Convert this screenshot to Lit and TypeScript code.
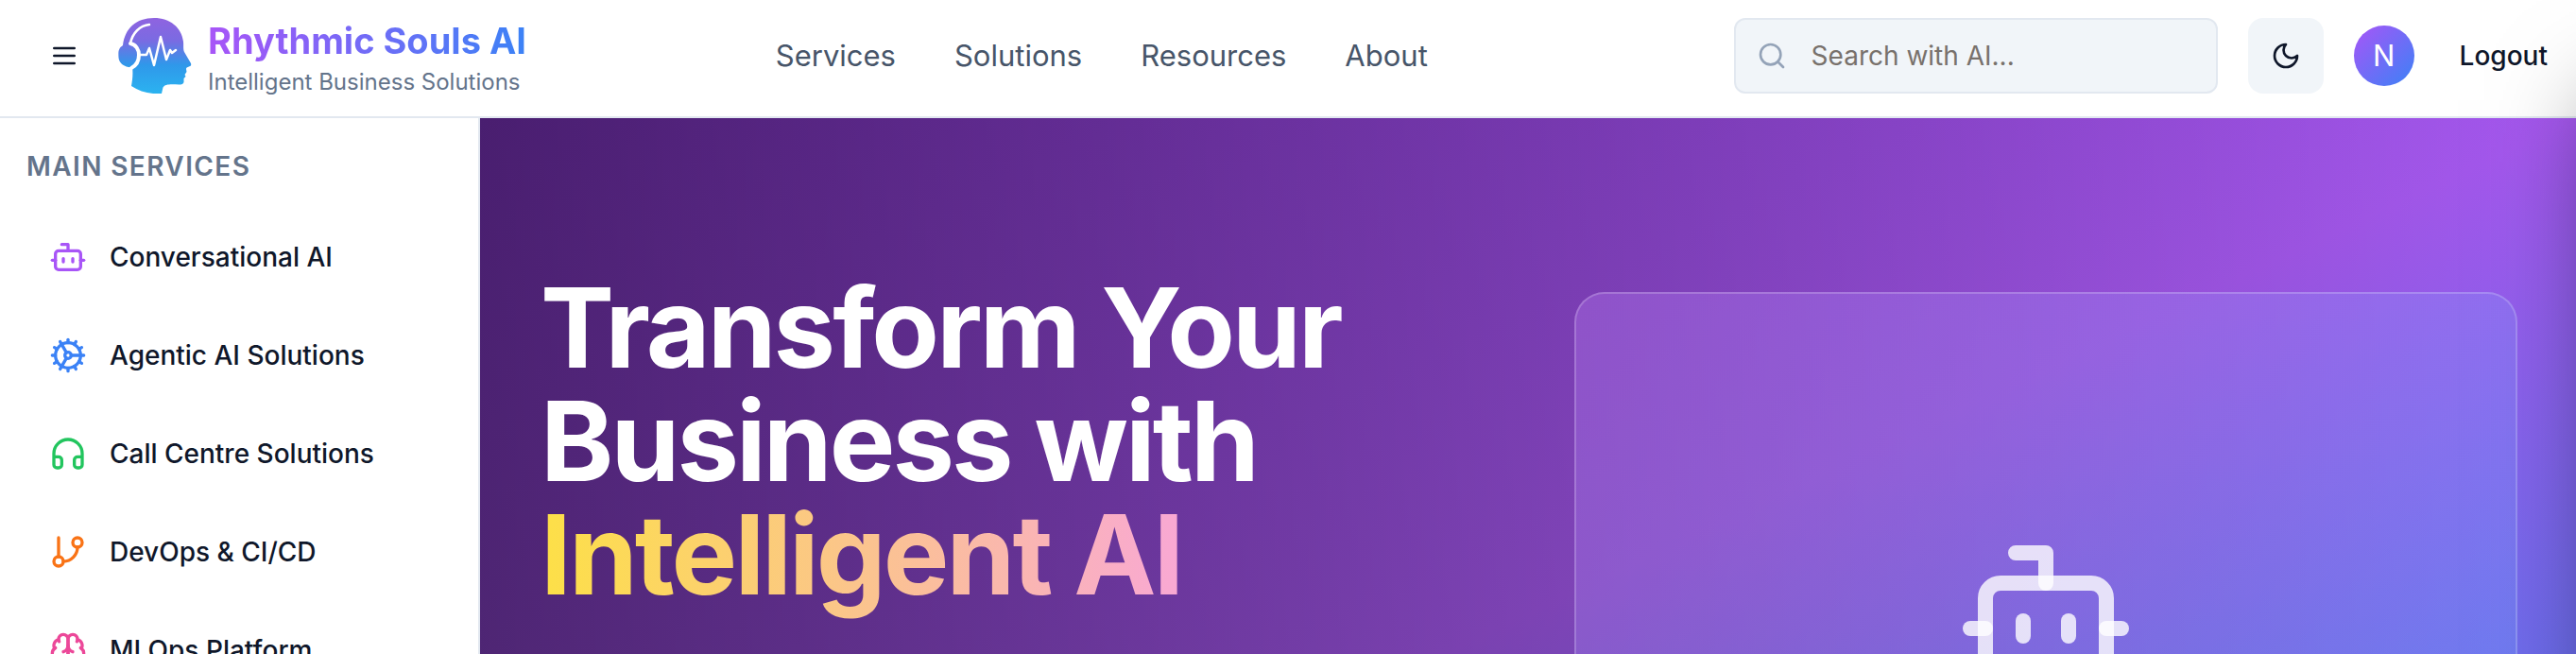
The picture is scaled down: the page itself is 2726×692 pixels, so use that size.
import { LitElement, html, css, svg } from "lit";
import { customElement } from "lit/decorators.js";

const botShape = svg`<path d="M12 8V4H8"/><rect width="16" height="12" x="4" y="8" rx="2"/><path d="M2 14h2"/><path d="M20 14h2"/><path d="M15 13v2"/><path d="M9 13v2"/>`;

const services = [
  { label: "Conversational AI", tone: "purple", shape: botShape },
  {
    label: "Agentic AI Solutions",
    tone: "blue",
    shape: svg`<path d="M12 20a8 8 0 1 0 0-16 8 8 0 0 0 0 16Z"/><path d="M12 14a2 2 0 1 0 0-4 2 2 0 0 0 0 4Z"/><path d="M12 2v2"/><path d="M12 22v-2"/><path d="m17 20.66-1-1.73"/><path d="M11 10.27 7 3.34"/><path d="m20.66 17-1.73-1"/><path d="m3.34 7 1.73 1"/><path d="M14 12h8"/><path d="M2 12h2"/><path d="m20.66 7-1.73 1"/><path d="m3.34 17 1.73-1"/><path d="m17 3.34-1 1.73"/><path d="m11 13.73-4 6.93"/>`,
  },
  {
    label: "Call Centre Solutions",
    tone: "green",
    shape: svg`<path d="M3 14h3a2 2 0 0 1 2 2v3a2 2 0 0 1-2 2H5a2 2 0 0 1-2-2v-7a9 9 0 0 1 18 0v7a2 2 0 0 1-2 2h-1a2 2 0 0 1-2-2v-3a2 2 0 0 1 2-2h3"/>`,
  },
  {
    label: "DevOps & CI/CD",
    tone: "orange",
    shape: svg`<line x1="6" x2="6" y1="3" y2="15"/><circle cx="18" cy="6" r="3"/><circle cx="6" cy="18" r="3"/><path d="M18 9a9 9 0 0 1-9 9"/>`,
  },
  {
    label: "MLOps Platform",
    tone: "pink",
    shape: svg`<path d="M12 5a3 3 0 1 0-5.997.125 4 4 0 0 0-2.526 5.77 4 4 0 0 0 .556 6.588A4 4 0 1 0 12 18Z"/><path d="M12 5a3 3 0 1 1 5.997.125 4 4 0 0 1 2.526 5.77 4 4 0 0 1-.556 6.588A4 4 0 1 1 12 18Z"/><path d="M15 13a4.5 4.5 0 0 1-3-4 4.5 4.5 0 0 1-3 4"/><path d="M17.599 6.5a3 3 0 0 0 .399-1.375"/><path d="M6.003 5.125A3 3 0 0 0 6.401 6.5"/><path d="M3.477 10.896a4 4 0 0 1 .585-.396"/><path d="M19.938 10.5a4 4 0 0 1 .585.396"/><path d="M6 18a4 4 0 0 1-1.967-.516"/><path d="M19.967 17.484A4 4 0 0 1 18 18"/>`,
  },
];

const navLinks = ["Services", "Solutions", "Resources", "About"];

@customElement("app-root")
export class AppRoot extends LitElement {
  static styles = css`
    :host {
      display: flex;
      flex-direction: column;
      position: relative;
      height: 100vh;
      overflow: hidden;
      background: #fff;
      color: #0f172a;
      font-family: Inter, "Liberation Sans", sans-serif;
      font-size: 28px;
      line-height: 40px;
    }
    * { box-sizing: border-box; }
    a { color: inherit; text-decoration: none; }
    button { font: inherit; color: inherit; border: 0; background: none; cursor: pointer; padding: 0; }
    .icon {
      display: block;
      flex: none;
      fill: none;
      stroke: currentColor;
      stroke-width: 2;
      stroke-linecap: round;
      stroke-linejoin: round;
    }
    .small { width: 32px; height: 32px; }
    .medium { width: 40px; height: 40px; }
    .large { width: 192px; height: 192px; }

    .header {
      display: flex;
      align-items: center;
      justify-content: space-between;
      flex: none;
      padding: 15px 30px 20px 52px;
      border-bottom: 2px solid #e2e8f0;
    }
    .start { display: flex; align-items: center; gap: 40px; }
    .brand { display: flex; align-items: center; gap: 16px; }
    .logo { display: block; width: 80px; height: 80px; }
    .name {
      font-size: 38px;
      line-height: 56px;
      font-weight: 700;
      background: linear-gradient(90deg, #a855f7, #3b82f6);
      background-clip: text;
      -webkit-background-clip: text;
      color: transparent;
    }
    .tagline { font-size: 24px; line-height: 32px; color: #64748b; }
    .nav { display: flex; gap: 62px; padding-right: 60px; font-size: 31px; color: #475569; }
    .end { display: flex; align-items: center; gap: 32px; }
    .search {
      display: flex;
      align-items: center;
      gap: 26px;
      width: 512px;
      height: 80px;
      padding: 0 22px;
      border: 2px solid #e2e8f0;
      border-radius: 12px;
      background: #f1f5f9;
      color: #94a3b8;
    }
    .field {
      flex: 1;
      min-width: 0;
      border: 0;
      outline: 0;
      padding: 0;
      background: none;
      font: inherit;
      color: #0f172a;
    }
    .field::placeholder { color: #78716c; opacity: 1; }
    .theme {
      display: grid;
      place-items: center;
      width: 80px;
      height: 80px;
      border-radius: 16px;
      background: #f1f5f9;
    }
    .account { display: flex; align-items: center; gap: 48px; }
    .avatar {
      display: grid;
      place-items: center;
      width: 64px;
      height: 64px;
      border-radius: 50%;
      background: linear-gradient(135deg, #a855f7, #3b82f6);
      color: #fff;
      font-size: 31px;
    }
    .logout { font-weight: 500; }

    .body { display: flex; flex: 1; min-height: 0; }
    .sidebar {
      flex: none;
      width: 508px;
      padding: 31px 28px 0;
      border-right: 2px solid #e2e8f0;
      overflow: hidden;
    }
    .group {
      margin: 0 0 28px;
      font-size: 28px;
      line-height: 40px;
      font-weight: 600;
      letter-spacing: 0.05em;
      text-transform: uppercase;
      color: #64748b;
    }
    .list { display: flex; flex-direction: column; gap: 8px; margin: 0; padding: 0; list-style: none; }
    .item { display: flex; align-items: center; gap: 24px; height: 96px; padding: 0 24px; font-weight: 500; }
    .purple { color: #a855f7; }
    .blue { color: #3b82f6; }
    .green { color: #22c55e; }
    .orange { color: #f97316; }
    .pink { color: #ec4899; }

    .main { flex: 1; min-width: 0; overflow: hidden; }
    .hero {
      display: grid;
      grid-template-columns: 1fr 1fr;
      grid-auto-rows: 724px;
      gap: 96px;
      padding: 162px 62px 162px 64px;
      background:
        linear-gradient(to right, rgba(0, 0, 0, 0.5), transparent),
        linear-gradient(to bottom right, #933ce0, #a659f0, #3f80f0);
    }
    .title {
      margin: 0;
      font-size: 117px;
      line-height: 120px;
      font-weight: 700;
      letter-spacing: -0.025em;
      color: #fff;
    }
    .line { display: block; width: fit-content; }
    .accent {
      padding-bottom: 16px;
      background: linear-gradient(90deg, #fde047, #f9a8d4);
      background-clip: text;
      -webkit-background-clip: text;
      color: transparent;
    }
    .card {
      display: grid;
      place-items: center;
      align-self: center;
      height: 680px;
      border: 2px solid rgba(255, 255, 255, 0.2);
      border-radius: 32px;
      background: linear-gradient(135deg, rgba(192, 132, 252, 0.3), rgba(96, 165, 250, 0.3)) border-box;
      color: rgba(255, 255, 255, 0.8);
    }
    /* Closed drawer: parked past the right edge, only its shadow reaches in. */
    .drawer {
      position: absolute;
      top: 32px;
      left: 100%;
      width: 768px;
      height: 200vh;
      background: #fff;
      box-shadow: 0 50px 100px -24px rgba(0, 0, 0, 0.5);
    }
  `;

  render() {
    return html`
      <header class="header">
        <div class="start">
          <button type="button" aria-label="Menu">
            <svg class="icon small" viewBox="0 0 24 24"><path d="M4 6h16M4 12h16M4 18h16"/></svg>
          </button>
          <a class="brand" href="#">
            ${this.renderLogo()}
            <div>
              <div class="name">Rhythmic Souls AI</div>
              <div class="tagline">Intelligent Business Solutions</div>
            </div>
          </a>
        </div>
        <nav class="nav">${navLinks.map((label) => html`<a href="#">${label}</a>`)}</nav>
        <div class="end">
          <label class="search">
            <svg class="icon small" viewBox="0 0 24 24"><circle cx="11" cy="11" r="8"/><path d="m21 21-4.3-4.3"/></svg>
            <input class="field" type="text" aria-label="Search" placeholder="Search with AI..." />
          </label>
          <button class="theme" type="button" aria-label="Toggle theme">
            <svg class="icon small" viewBox="0 0 24 24"><path d="M12 3a6 6 0 0 0 9 9 9 9 0 1 1-9-9Z"/></svg>
          </button>
          <div class="account">
            <span class="avatar">N</span>
            <button class="logout" type="button">Logout</button>
          </div>
        </div>
      </header>
      <div class="body">
        <aside class="sidebar">
          <h2 class="group">Main Services</h2>
          <ul class="list">
            ${services.map(
              (s) => html`<li>
                <a class="item" href="#">
                  <svg class="icon medium ${s.tone}" viewBox="0 0 24 24">${s.shape}</svg>
                  <span>${s.label}</span>
                </a>
              </li>`
            )}
          </ul>
        </aside>
        <main class="main">
          <section class="hero">
            <h1 class="title">
              <span class="line">Transform Your</span>
              <span class="line">Business with</span>
              <span class="line accent">Intelligent AI</span>
            </h1>
            <div class="card">
              <svg class="icon large" viewBox="0 0 24 24">${botShape}</svg>
            </div>
          </section>
        </main>
      </div>
      <div class="drawer" aria-hidden="true"></div>
    `;
  }

  private renderLogo() {
    return html`<svg class="logo" viewBox="0 0 80 80" aria-hidden="true">
      <defs>
        <linearGradient id="head" x1="0" y1="0" x2="0" y2="1">
          <stop offset="0" stop-color="#8f63e0" />
          <stop offset="0.3" stop-color="#7a6be2" />
          <stop offset="0.62" stop-color="#2f98ea" />
          <stop offset="1" stop-color="#2bb3f0" />
        </linearGradient>
      </defs>
      <path fill="url(#head)" d="M6 29C8 11 20 0 39 0c17 0 29 10 31 25 .4 5-.4 8 1 11l7 12c.6 2 0 3-2 3.500-2 .5-3 1-3 2.500l.5 3-2 3 1 2-2 2v4c-.5 2-2.500 2.500-5 2.500-8-.5-15-1-17 3L47 80C35 81 24 78 15 72c1-6 2-13 1-20C10 53 2 49 1.500 42 1 35 1.500 32 6 29Z"/>
      <path fill="none" stroke="#fff" stroke-width="2.500" stroke-linecap="round" d="M14 27C16 16 24 8 34 7"/>
      <path fill="none" stroke="#fff" stroke-width="4" stroke-linecap="round" d="M14 27C20 28 23 34 23 39c0 7-2 11-8 14"/>
      <path fill="none" stroke="#fff" stroke-width="2.500" stroke-linecap="round" stroke-linejoin="round" d="M24 39h7l3-7 5 18 7-30 6 24 4-10 2 3 4-3"/>
    </svg>`;
  }
}
